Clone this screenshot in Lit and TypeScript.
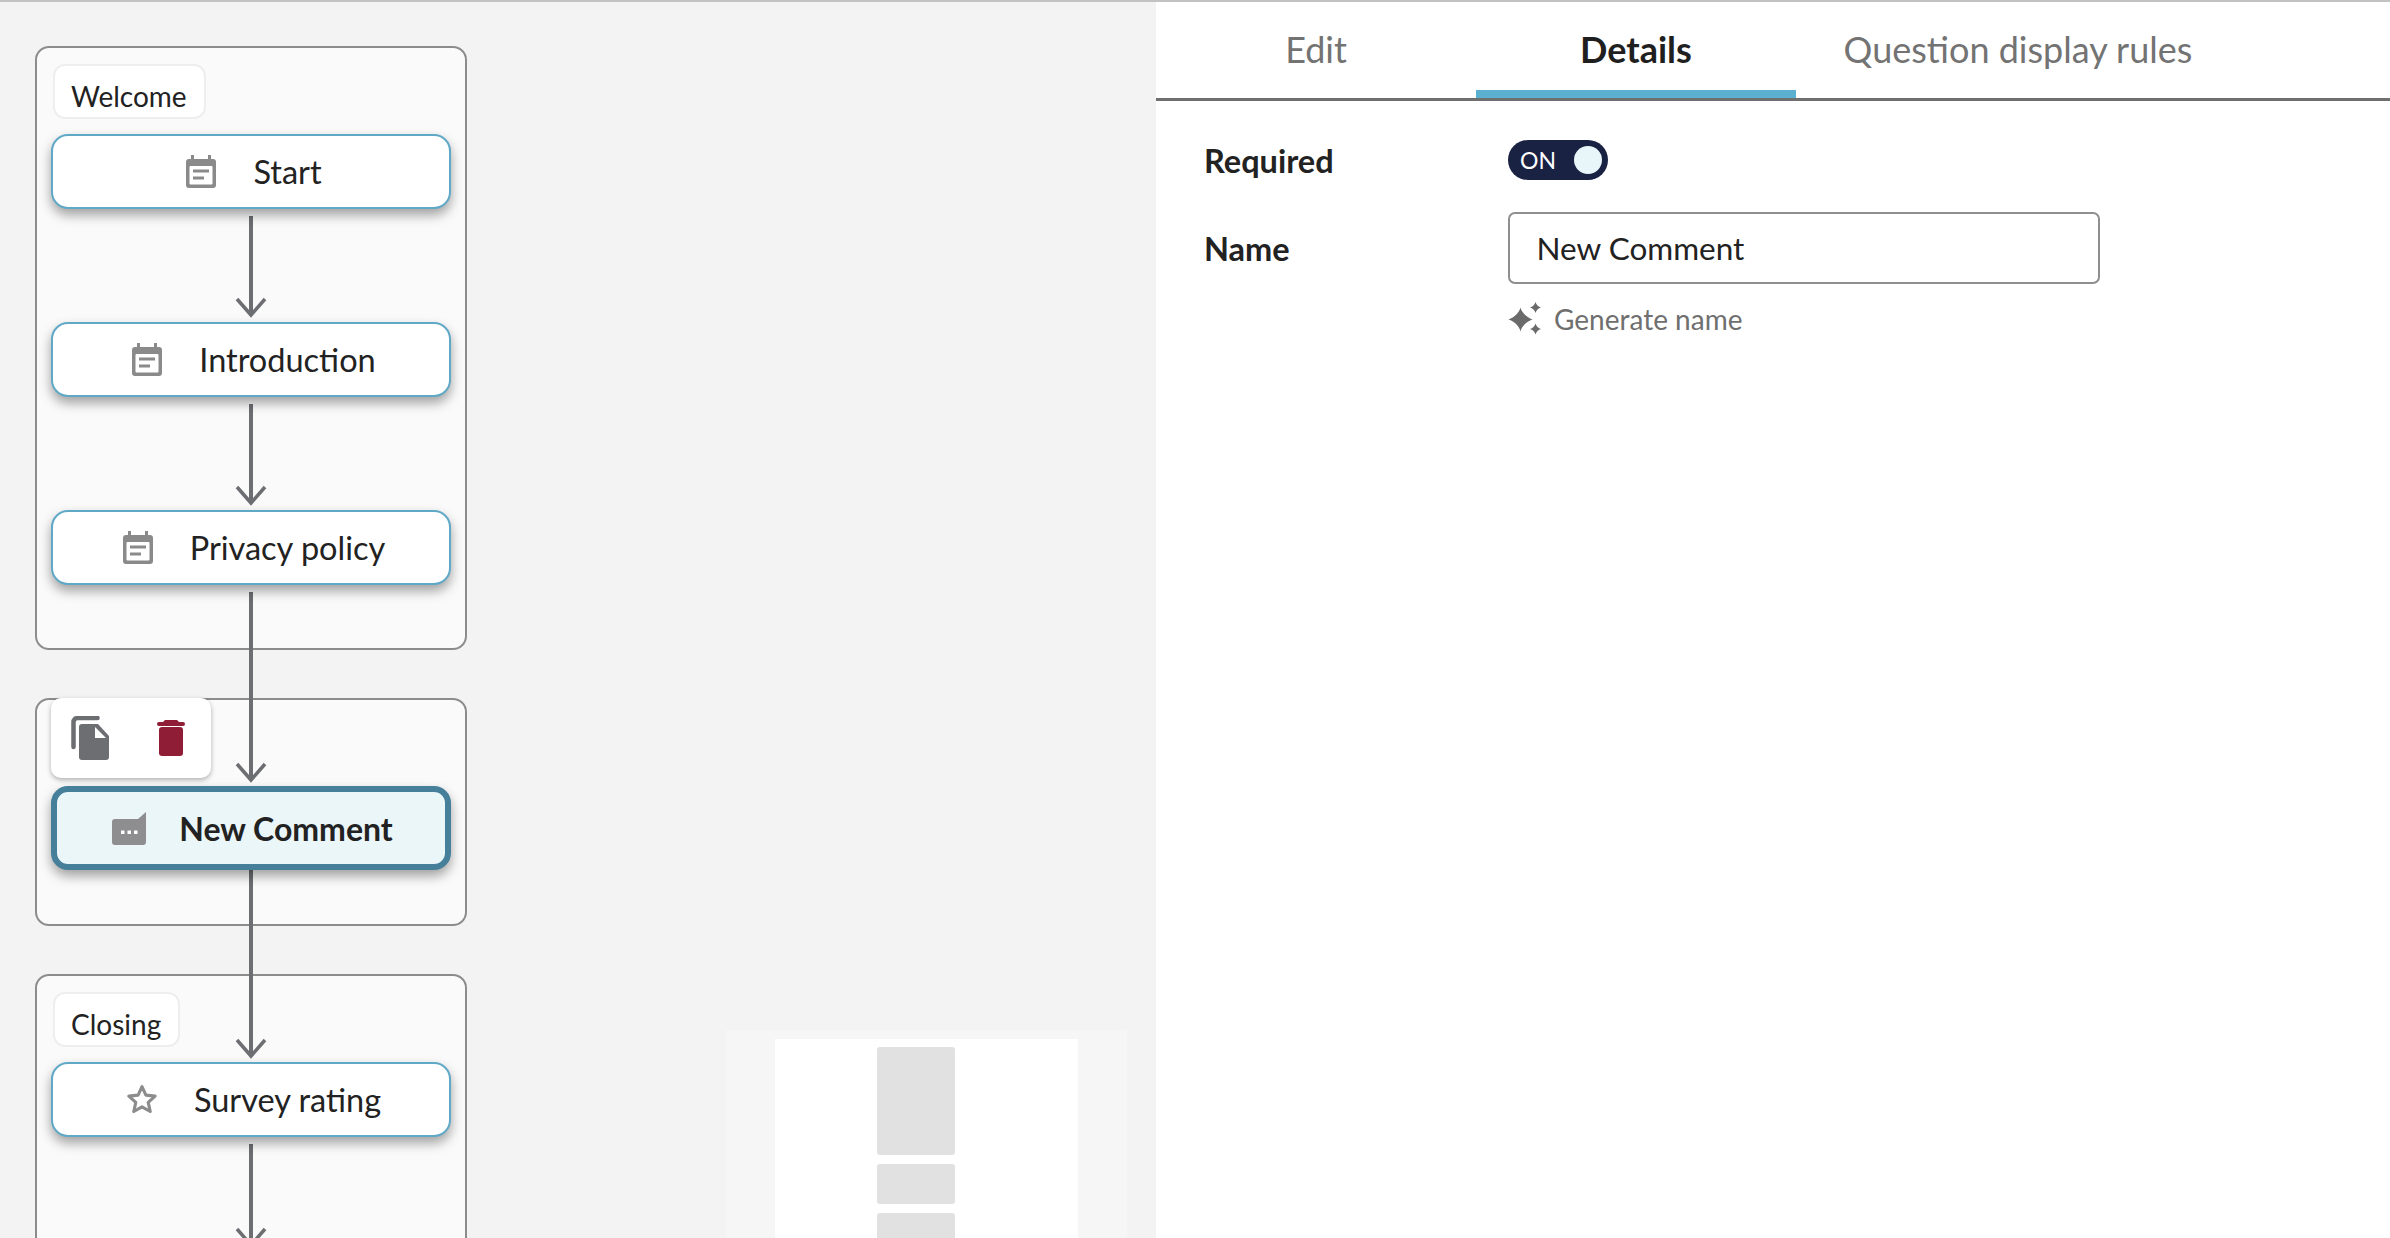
import { LitElement, html, css, svg } from 'lit';
import { customElement } from 'lit/decorators.js';

type FlowNode = { name: string; top: number; height: number; icon: string; selected?: boolean };

const groups = [
  { top: 46, height: 604, label: 'Welcome' },
  { top: 698, height: 228, label: '' },
  { top: 974, height: 400, label: 'Closing' },
];

const nodes: FlowNode[] = [
  { name: 'Start', top: 134, height: 75, icon: 'form' },
  { name: 'Introduction', top: 322, height: 75, icon: 'form' },
  { name: 'Privacy policy', top: 510, height: 75, icon: 'form' },
  { name: 'New Comment', top: 786, height: 84, icon: 'comment', selected: true },
  { name: 'Survey rating', top: 1062, height: 75, icon: 'star' },
];

const arrows = [
  [216, 317],
  [404, 505],
  [592, 782],
  [860, 1058],
  [1144, 1247],
];

const formIcon = html`<svg width="30" height="33" viewBox="0 0 30 33">
  <path fill="#8a8a8a" d="M5 0h3v4h14V0h3v4h2a3 3 0 0 1 3 3v23a3 3 0 0 1-3 3H3a3 3 0 0 1-3-3V7a3 3 0 0 1 3-3h2z" />
  <rect x="3.500" y="11" width="23" height="18.500" rx="1" fill="#fff" />
  <rect x="7" y="14.500" width="16" height="3" fill="#8a8a8a" />
  <rect x="7" y="21.500" width="11" height="3" fill="#8a8a8a" />
</svg>`;

const commentIcon = html`<svg width="34" height="33" viewBox="0 0 34 33">
  <path fill="#8e8d8f" d="M3 7h23l8-7v30a3 3 0 0 1-3 3H3a3 3 0 0 1-3-3V10a3 3 0 0 1 3-3z" />
  <rect x="9" y="18.500" width="3.500" height="3.500" fill="#fff" />
  <rect x="15.500" y="18.500" width="3.500" height="3.500" fill="#fff" />
  <rect x="22" y="18.500" width="3.500" height="3.500" fill="#fff" />
</svg>`;

const starIcon = html`<svg width="30" height="29" viewBox="1.500 1.500 27 26">
  <path
    fill="none"
    stroke="#8c8c8c"
    stroke-width="2.800"
    stroke-linejoin="round"
    d="M15 3l3.500 7.600 8.300.9-6.200 5.600 1.800 8.200L15 21.100l-7.400 4.200 1.800-8.200-6.200-5.600 8.300-.9z"
  />
</svg>`;

const copyIcon = html`<svg width="38" height="44" viewBox="0 0 38 44">
  <path fill="none" stroke="#6d6e72" stroke-width="4.500" stroke-linecap="round" d="M2.500 31V6a4 4 0 0 1 4-4h20" />
  <path fill="#6d6e72" d="M11 8h16l11 12v21a3 3 0 0 1-3 3H11a3 3 0 0 1-3-3V11a3 3 0 0 1 3-3z" />
  <path fill="#fff" d="M24 11l11 11H24z" />
</svg>`;

const trashIcon = html`<svg width="28" height="36" viewBox="0 0 28 36">
  <path fill="#8f1d35" d="M8 0h12l2 2h4a2 2 0 0 1 0 4H2a2 2 0 0 1 0-4h4z" />
  <path fill="#8f1d35" d="M5 7h18a3 3 0 0 1 3 3v23a3 3 0 0 1-3 3H5a3 3 0 0 1-3-3V10a3 3 0 0 1 3-3z" />
</svg>`;

const sparkIcon = html`<svg width="34" height="34" viewBox="0 0 34 34">
  <path fill="#6a6a6a" d="M12.500 5.500c1 4.700 6 10 12 12-6 1.700-11 7-12 12-1-5-6-10.300-12-12 6-2 11-7.300 12-12z" />
  <path fill="#6a6a6a" d="M27.500 0c.5 2.500 3 5 5.500 5.500-2.500.5-5 3-5.500 5.500-.5-2.500-3-5-5.500-5.500 2.500-.5 5-3 5.500-5.500z" />
  <path fill="#6a6a6a" d="M27.500 21.500c.5 2.500 3 5 5.500 5.500-2.500.5-5 3-5.500 5.500-.5-2.500-3-5-5.500-5.500 2.500-.5 5-3 5.500-5.500z" />
</svg>`;

const icons: Record<string, unknown> = { form: formIcon, comment: commentIcon, star: starIcon };

@customElement('app-root')
export default class App extends LitElement {
  static override styles = css`
    :host {
      display: block;
      height: 1238px;
      overflow: hidden;
      font-family: 'Lato', 'Liberation Sans', sans-serif;
      color: #222;
    }
    .app {
      display: flex;
      height: 100%;
    }
    .canvas {
      position: relative;
      flex: 0 0 1156px;
      background: #f3f3f3;
      overflow: hidden;
      border-top: 2px solid #c2c2c2;
      box-sizing: border-box;
    }
    .canvas__inner {
      position: absolute;
      left: 0;
      top: -2px;
      width: 1156px;
      height: 1238px;
    }
    .group {
      position: absolute;
      left: 35px;
      width: 432px;
      box-sizing: border-box;
      border: 2px solid #8c8c8c;
      border-radius: 14px;
      background: #fafafa;
      padding: 16px;
    }
    .group__label {
      display: inline-flex;
      align-items: center;
      box-sizing: border-box;
      height: 55px;
      padding: 9px 17px 0 16px;
      border: 2px solid #eeeeee;
      border-radius: 12px;
      background: #fff;
      font-size: 28px;
    }
    .links {
      position: absolute;
      left: 0;
      top: 0;
    }
    .node {
      position: absolute;
      left: 51px;
      width: 400px;
      box-sizing: border-box;
      display: flex;
      align-items: center;
      justify-content: center;
      gap: 37px;
      padding-left: 6px;
      border: 2px solid #5fa9c7;
      border-radius: 17px;
      background: #fff;
      box-shadow: 0 6px 12px rgba(0, 0, 0, 0.36);
      font-size: 32.500px;
    }
    .node svg {
      display: block;
      flex: none;
    }
    .node--selected {
      border: 6px solid #457f9a;
      background: #ebf6f9;
      font-weight: 700;
      font-size: 32px;
      gap: 33px;
      padding-left: 3px;
    }
    .toolbar {
      position: absolute;
      left: 51px;
      top: 698px;
      width: 160px;
      height: 80px;
      box-sizing: border-box;
      display: flex;
      align-items: flex-start;
      padding: 18px 0 0 20px;
      gap: 48px;
      background: #fff;
      border-radius: 10px;
      box-shadow: 0 2px 5px rgba(0, 0, 0, 0.3);
    }
    .toolbar svg {
      display: block;
    }
    .toolbar__trash {
      margin-top: 4px;
    }
    .minimap {
      position: absolute;
      left: 726px;
      top: 1030px;
      width: 401px;
      height: 208px;
      background: #f6f6f6;
      display: flex;
      justify-content: center;
      padding-top: 9px;
      box-sizing: border-box;
    }
    .minimap__page {
      width: 303px;
      background: #fff;
      display: flex;
      flex-direction: column;
      align-items: flex-start;
      gap: 9px;
      padding: 8px 0 0 102px;
      box-sizing: border-box;
    }
    .minimap__block {
      flex: none;
      width: 78px;
      background: #e1e1e1;
      border-radius: 3px;
    }
    .panel {
      flex: 1;
      background: #fff;
      display: flex;
      flex-direction: column;
      border-top: 2px solid #c2c2c2;
    }
    .tabs {
      display: flex;
      height: 99px;
      box-sizing: border-box;
      border-bottom: 3px solid #6f6f6f;
    }
    .tab {
      box-sizing: border-box;
      height: 96px;
      width: 320px;
      padding-top: 6px;
      display: flex;
      align-items: center;
      justify-content: center;
      font-size: 36px;
      color: #737373;
      border-bottom: 8px solid transparent;
    }
    .tab--active {
      color: #1f1f1f;
      font-weight: 700;
      border-bottom-color: #5bafcf;
    }
    .tab--wide {
      width: 444px;
    }
    .form {
      display: grid;
      grid-template-columns: 304px 592px;
      align-items: center;
      row-gap: 32px;
      padding: 39px 0 0 48px;
    }
    .form__label {
      font-size: 32.500px;
      font-weight: 700;
    }
    .toggle {
      display: flex;
      align-items: center;
      justify-content: space-between;
      box-sizing: border-box;
      width: 100px;
      height: 40px;
      padding: 0 6px 0 12px;
      border-radius: 20px;
      background: #1a2244;
      color: #fff;
      font-size: 23px;
    }
    .toggle__knob {
      width: 28px;
      height: 28px;
      border-radius: 50%;
      background: #e9f6f9;
    }
    .input {
      box-sizing: border-box;
      width: 592px;
      height: 72px;
      padding: 0 26.500px;
      border: 2px solid #8f8f8f;
      border-radius: 7px;
      font: 31.500px 'Lato', 'Liberation Sans', sans-serif;
      color: #222;
      background: #fff;
      outline: none;
    }
    .generate {
      grid-column: 2;
      display: flex;
      align-items: center;
      gap: 12px;
      margin-top: -14px;
      font-size: 28px;
      color: #6f6f6f;
    }
    .generate svg {
      display: block;
    }
  `;

  private renderLinks() {
    return html`<svg class="links" width="1156" height="1238">
      ${arrows.map(
        ([from, to]) => svg`
          <path d="M251 ${from}V${to - 2}" fill="none" stroke="#6d6e72" stroke-width="4" />
          <path d="M237 ${to - 18}L251 ${to - 2}L265 ${to - 18}" fill="none" stroke="#6d6e72" stroke-width="3.500" />
        `
      )}
    </svg>`;
  }

  override render() {
    return html`
      <div class="app">
        <div class="canvas">
          <div class="canvas__inner">
            ${groups.map(
              (g) => html`<div class="group" style="top:${g.top}px;height:${g.height}px">
                ${g.label ? html`<div class="group__label">${g.label}</div>` : ''}
              </div>`
            )}
            ${this.renderLinks()}
            ${nodes.map(
              (n) => html`<div
                class="node ${n.selected ? 'node--selected' : ''}"
                style="top:${n.top}px;height:${n.height}px"
              >
                ${icons[n.icon]}<span>${n.name}</span>
              </div>`
            )}
            <div class="toolbar">
              ${copyIcon}
              <div class="toolbar__trash">${trashIcon}</div>
            </div>
            <div class="minimap">
              <div class="minimap__page">
                ${[108, 40, 60].map((h) => html`<div class="minimap__block" style="height:${h}px"></div>`)}
              </div>
            </div>
          </div>
        </div>
        <div class="panel">
          <div class="tabs">
            <div class="tab">Edit</div>
            <div class="tab tab--active">Details</div>
            <div class="tab tab--wide">Question display rules</div>
          </div>
          <div class="form">
            <div class="form__label">Required</div>
            <div class="toggle"><span>ON</span><span class="toggle__knob"></span></div>
            <div class="form__label">Name</div>
            <input class="input" .value=${'New Comment'} />
            <div class="generate">${sparkIcon}<span>Generate name</span></div>
          </div>
        </div>
      </div>
    `;
  }
}
